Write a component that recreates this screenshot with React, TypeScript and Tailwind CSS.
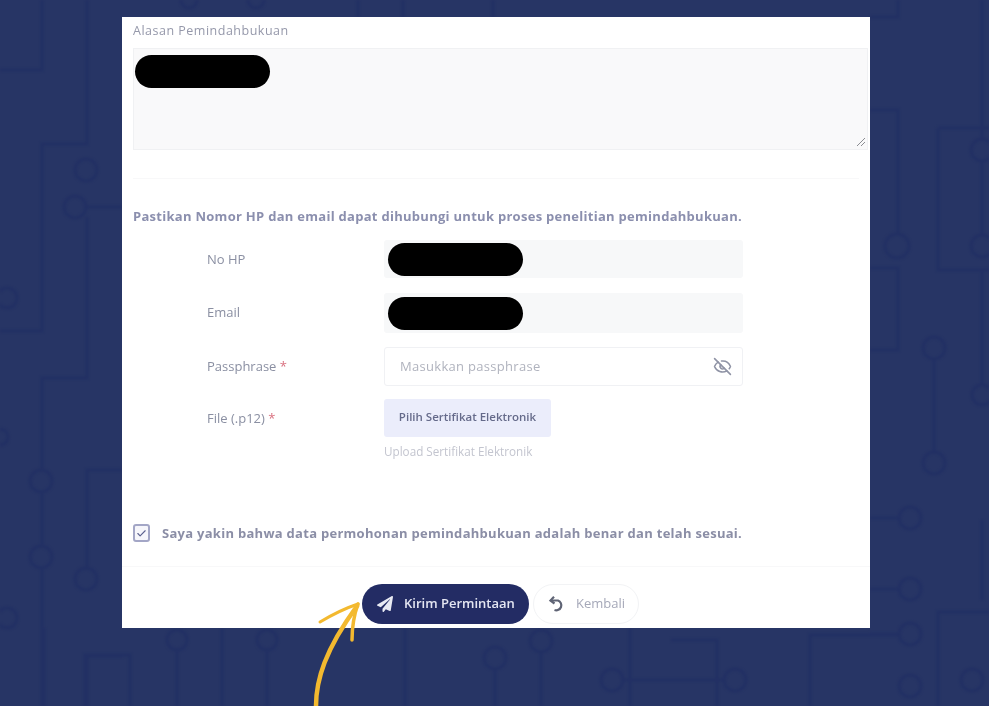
import React from "react";
import { EyeOff, Check } from "lucide-react";
import { FaPaperPlane } from "react-icons/fa";

const paths = [
  "M0 70H42V0", "M87 0V144H42V331H0", "M85 207H122", "M87 217V378H42V470", "M42 568V706", "M122 470H87V570", "M122 656H87V706", "M42 492V546",
  "M870 17H898V0", "M870 110H898V234", "M870 268H898V350H870", "M938 128V270H989", "M938 128H989", "M982 0V139", "M982 161V235", "M982 270V384",
  "M934 359V452", "M870 518H899", "M870 589H899", "M870 634H899", "M982 520V600", "M989 612H938V706",
  "M85 706V655H130V706", "M177 650V706", "M267 650V706", "M222 628V706", "M44 628V706", "M405 628V706", "M495 669V706", "M541 652V706",
  "M623 680H724", "M671 640H717V706", "M810 706V635H899", "M358 0V17", "M403 0V17", "M493 0V17", "M630 628V706",
];
const circles: [number, number, number][] = [
  [86, 170, 11], [75, 207, 11], [41, 481, 11], [41, 557, 11], [7, 298, 10], [7, 618, 10], [0, 437, 8],
  [86, 579, 11], [897, 246, 12], [982, 150, 11], [982, 246, 11], [982, 395, 10], [934, 348, 11], [934, 463, 11],
  [910, 518, 11], [910, 589, 11], [910, 634, 11], [910, 686, 11], [972, 680, 11],
  [177, 640, 10], [267, 640, 10], [495, 658, 11], [541, 641, 11], [612, 680, 11], [735, 680, 11], [189, 0, 8], [256, 0, 8],
];

function CircuitBackground() {
  return (
    <svg className="absolute inset-0 blur-[1px]" width="989" height="706" viewBox="0 0 989 706" fill="none" stroke="#223064" strokeWidth="3">
      {paths.map((d) => <path key={d} d={d} />)}
      {circles.map(([cx, cy, r]) => <circle key={`${cx}-${cy}`} cx={cx} cy={cy} r={r} />)}
    </svg>
  );
}

function Redacted() {
  return <div className="h-[33px] w-[135px] rounded-full bg-black" />;
}

function Row({ label, star, children }: { label: string; star?: boolean; children: React.ReactNode }) {
  return (
    <div className="flex items-start">
      <div className="w-[178px] pl-[1px] pt-[10px] text-[13px] leading-[18px] text-[#8a8fa2]">
        {label}{star && <span className="text-[#d9707f]"> *</span>}
      </div>
      {children}
    </div>
  );
}

export default function App() {
  return (
    <div className="relative h-[706px] w-[989px] overflow-hidden bg-[#273565] pl-[122px] pt-[17px] font-['Open_Sans','Noto_Sans',sans-serif]">
      <CircuitBackground />
      <div className="relative flex h-[611px] w-[748px] flex-col bg-white blur-[0.6px]">
        <div className="px-[11px] pt-[6px] text-[12.5px] leading-[16px] tracking-[0.5px] text-[#9598aa]">Alasan Pemindahbukuan</div>
        <div className="relative mx-[11px] mt-[9px] h-[102px] w-[735px] border border-[#f0f1f3] bg-[#f9f9fa] pl-[1px] pt-[6px]">
          <Redacted />
          <svg className="absolute bottom-[2px] right-[1px]" width="10" height="10" viewBox="0 0 10 10" stroke="#8b8d92" strokeWidth="1">
            <path d="M9 1L1 9M9 5L5 9" />
          </svg>
        </div>
        <div className="mx-[11px] mt-[28px] border-t border-[#f8f8f9]" />
        <div className="mt-[28px] whitespace-nowrap px-[11px] text-[13px] font-bold leading-[18px] tracking-[0.28px] text-[#8b8fae]">
          Pastikan Nomor HP dan email dapat dihubungi untuk proses penelitian pemindahbukuan.
        </div>
        <div className="ml-[84px] mt-[15px] flex flex-col">
          <Row label="No HP">
            <div className="flex h-[38px] w-[359px] items-center rounded-[3px] bg-[#f7f8f9] pl-[4px]"><Redacted /></div>
          </Row>
          <div className="mt-[15px]">
            <Row label="Email">
              <div className="flex h-[40px] w-[359px] items-center rounded-[3px] bg-[#f7f8f9] pl-[4px] pt-[1px]"><Redacted /></div>
            </Row>
          </div>
          <div className="mt-[14px]">
            <Row label="Passphrase" star>
              <div className="flex h-[39px] w-[359px] items-center justify-between rounded-[3px] border border-[#f0f1f4] pl-[15px] pr-[10px] text-[13px] tracking-[0.3px] text-[#b0b3be]">
                <span>Masukkan passphrase</span>
                <EyeOff size={19} strokeWidth={2} className="text-[#8f93a5]" />
              </div>
            </Row>
          </div>
          <div className="mt-[13px]">
            <Row label="File (.p12)" star>
              <div>
                <div className="flex h-[38px] w-[167px] items-center justify-center rounded-[3px] bg-[#ebedfb] pb-[3px] text-[11.5px] font-semibold text-[#656a8a]">
                  Pilih Sertifikat Elektronik
                </div>
                <div className="mt-[7px] text-[11.7px] leading-[14px] text-[#c3c5cf]">Upload Sertifikat Elektronik</div>
              </div>
            </Row>
          </div>
        </div>
        <div className="ml-[11px] mt-[66px] flex items-center">
          <div className="flex h-[18px] w-[17px] items-center justify-center rounded-[3px] border-2 border-[#a3a6c6] bg-[#f6f6fb]">
            <Check size={11} strokeWidth={2.5} className="text-[#5d6290]" />
          </div>
          <span className="ml-[12px] whitespace-nowrap text-[13px] font-bold leading-[18px] tracking-[0.28px] text-[#8b8ea6]">
            Saya yakin bahwa data permohonan pemindahbukuan adalah benar dan telah sesuai.
          </span>
        </div>
        <div className="mt-[24px] border-t border-[#f8f8f9]" />
        <div className="ml-[240px] mt-[17px] flex items-center gap-[4px]">
          <div className="flex h-[40px] w-[167px] items-center rounded-full bg-[#232c64] pl-[15px] text-[13px] font-semibold text-[#e4e6f2]">
            <FaPaperPlane size={16} className="text-[#e8eaf3]" />
            <span className="ml-[11px]">Kirim Permintaan</span>
          </div>
          <div className="flex h-[40px] w-[106px] items-center rounded-full border border-[#f2f3f5] pl-[14px] text-[13px] text-[#a5a8b8]">
            <svg width="18" height="18" viewBox="0 0 18 18" fill="none" stroke="#5f6475" strokeWidth="2.2">
              <path d="M2.5 5.5H10A5 5 0 1 1 6.5 15" />
              <path d="M6 1.8L2.5 5.5L6.5 8.5" />
            </svg>
            <span className="ml-[10px]">Kembali</span>
          </div>
        </div>
      </div>
      <svg className="absolute left-0 top-0" width="989" height="706" viewBox="0 0 989 706" fill="none" stroke="#f3b92f" strokeLinecap="round">
        <path d="M316 706C316 680 325 650 357 606" strokeWidth="4.5" />
        <path d="M320 622C335 613 346 608 358 604" strokeWidth="3" />
        <path d="M358 604C354 615 352 628 352 640" strokeWidth="3.5" />
      </svg>
    </div>
  );
}
